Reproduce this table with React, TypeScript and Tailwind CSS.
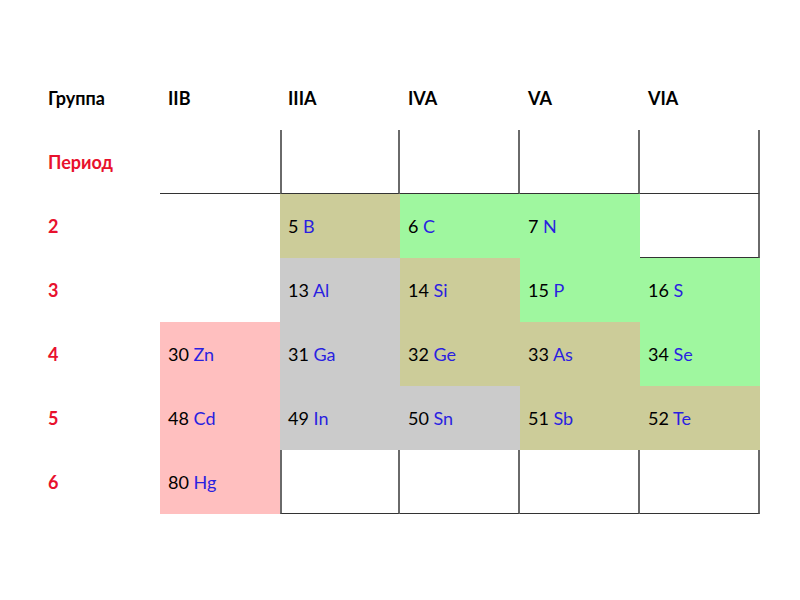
import React from "react";

type Cell = { n?: number; s?: string; bg?: string; border?: string };

const groups = ["IIB", "IIIA", "IVA", "VA", "VIA"];

const TAN = "bg-[#cccc99]";
const GREEN = "bg-[#9ff79f]";
const GRAY = "bg-[#cbcbcb]";
const PINK = "bg-[#ffbfbf]";

// vertical lines a bit thicker and lighter than horizontal ones
const BOX_L = "border-l-2 border-r-2 border-b border-l-[#6a6a6a] border-r-[#6a6a6a] border-b-[#333]";
const BOX = "border-r-2 border-b border-r-[#6a6a6a] border-b-[#333]";

const rows: { period: string; cells: Cell[] }[] = [
  {
    period: "2",
    cells: [
      {},
      { n: 5, s: "B", bg: TAN },
      { n: 6, s: "C", bg: GREEN },
      { n: 7, s: "N", bg: GREEN },
      { border: BOX },
    ],
  },
  {
    period: "3",
    cells: [
      {},
      { n: 13, s: "Al", bg: GRAY },
      { n: 14, s: "Si", bg: TAN },
      { n: 15, s: "P", bg: GREEN },
      { n: 16, s: "S", bg: GREEN },
    ],
  },
  {
    period: "4",
    cells: [
      { n: 30, s: "Zn", bg: PINK },
      { n: 31, s: "Ga", bg: GRAY },
      { n: 32, s: "Ge", bg: TAN },
      { n: 33, s: "As", bg: TAN },
      { n: 34, s: "Se", bg: GREEN },
    ],
  },
  {
    period: "5",
    cells: [
      { n: 48, s: "Cd", bg: PINK },
      { n: 49, s: "In", bg: GRAY },
      { n: 50, s: "Sn", bg: GRAY },
      { n: 51, s: "Sb", bg: TAN },
      { n: 52, s: "Te", bg: TAN },
    ],
  },
  {
    period: "6",
    cells: [
      { n: 80, s: "Hg", bg: PINK },
      { border: BOX_L },
      { border: BOX },
      { border: BOX },
      { border: BOX },
    ],
  },
];

export default function App() {
  return (
    <div className="w-[800px] h-[600px] bg-white pt-[66px] pl-[40px] text-[18px] font-['Lato','Carlito',sans-serif]">
      <div className="grid grid-cols-[repeat(6,120px)] auto-rows-[64px]">
        {/* header */}
        <div className="flex items-center pl-2 font-bold text-black">Группа</div>
        {groups.map((g) => (
          <div key={g} className="flex items-center pl-2 font-bold text-black">
            {g}
          </div>
        ))}

        {/* period label row */}
        <div className="flex items-center pl-2 font-bold text-[#e8112d]">Период</div>
        <div className="border-b border-b-[#333]" />
        <div className={BOX_L} />
        <div className={BOX} />
        <div className={BOX} />
        <div className={BOX} />

        {rows.map((r) => (
          <React.Fragment key={r.period}>
            <div className="flex items-center pl-2 font-bold text-[#e8112d]">{r.period}</div>
            {r.cells.map((c, i) => (
              <div
                key={i}
                className={`flex items-center pl-2 ${c.bg ?? ""} ${c.border ?? ""}`}
              >
                {c.n !== undefined && (
                  <span>
                    <span className="text-black">{c.n}</span>{" "}
                    <span className="text-[#2a1fe0]">{c.s}</span>
                  </span>
                )}
              </div>
            ))}
          </React.Fragment>
        ))}
      </div>
    </div>
  );
}
